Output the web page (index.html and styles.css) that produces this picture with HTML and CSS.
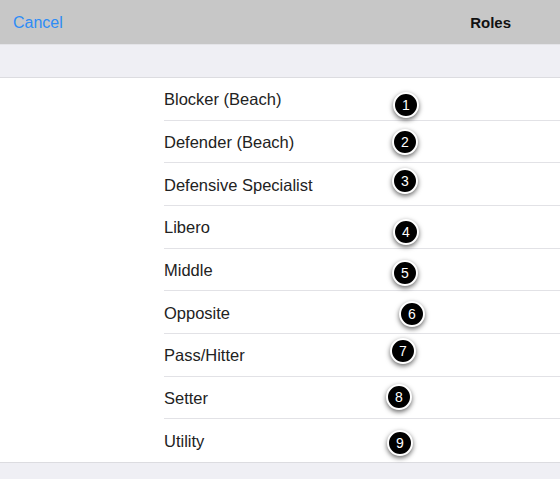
FILE: index.html
```html
<!DOCTYPE html>
<html>
<head>
<meta charset="utf-8">
<link rel="stylesheet" href="styles.css">
</head>
<body>
<div class="screen">
  <header class="navbar">
    <span class="cancel">Cancel</span>
    <span class="title">Roles</span>
  </header>
  <div class="spacer"></div>
  <ul class="list">
    <li class="row"><span class="label">Blocker (Beach)</span></li>
    <li class="row"><span class="label">Defender (Beach)</span></li>
    <li class="row"><span class="label">Defensive Specialist</span></li>
    <li class="row"><span class="label">Libero</span></li>
    <li class="row"><span class="label">Middle</span></li>
    <li class="row"><span class="label">Opposite</span></li>
    <li class="row"><span class="label">Pass/Hitter</span></li>
    <li class="row"><span class="label">Setter</span></li>
    <li class="row last"><span class="label">Utility</span></li>
  </ul>
  <div class="footer"></div>
  <span class="badge b1">1</span>
  <span class="badge b2">2</span>
  <span class="badge b3">3</span>
  <span class="badge b4">4</span>
  <span class="badge b5">5</span>
  <span class="badge b6">6</span>
  <span class="badge b7">7</span>
  <span class="badge b8">8</span>
  <span class="badge b9">9</span>
</div>
</body>
</html>
```

FILE: styles.css
```css
html, body {
  margin: 0;
  padding: 0;
  background: #efeff4;
  font-family: "Liberation Sans", Arial, sans-serif;
}
.screen {
  position: relative;
  width: 560px;
  height: 479px;
  overflow: hidden;
  background: #efeff4;
}
.navbar {
  height: 44px;
  background: #c7c7c7;
  border-bottom: 1px solid #e4e4e8;
  display: flex;
  align-items: center;
  padding: 0 13px;
}
.cancel {
  color: #2e8cf6;
  font-size: 16px;
  padding-top: 1px;
}
.title {
  margin-left: auto;
  margin-right: 36px;
  font-size: 15px;
  font-weight: bold;
  color: #111;
  padding-top: 1px;
}
.spacer {
  height: 32px;
  background: #efeff4;
  border-bottom: 1px solid #dcdce0;
}
.list {
  list-style: none;
  margin: 0;
  padding: 0;
  background: #fff;
  border-bottom: 1px solid #dcdce0;
}
.row {
  height: 42.667px;
  padding-left: 164px;
  display: flex;
}
.label {
  flex: 1;
  display: flex;
  align-items: center;
  padding-top: 2px;
  border-bottom: 1px solid #e2e2e6;
  font-size: 16.5px;
  color: #222;
}
.row.last .label {
  border-bottom: none;
}
.footer {
  flex: 1;
}
.badge {
  position: absolute;
  width: 22px;
  height: 22px;
  border-radius: 50%;
  background: #000;
  border: 2px solid #fff;
  box-shadow: 0 2px 5px rgba(0, 0, 0, 0.6);
  color: #fff;
  font-size: 14px;
  display: flex;
  align-items: center;
  justify-content: center;
}
.b1 { left: 393px; top: 92px; }
.b2 { left: 392px; top: 129px; }
.b3 { left: 392px; top: 168px; }
.b4 { left: 393px; top: 219px; }
.b5 { left: 392px; top: 260px; }
.b6 { left: 399px; top: 301px; }
.b7 { left: 390px; top: 338px; }
.b8 { left: 386px; top: 384px; }
.b9 { left: 387px; top: 430px; }
```
